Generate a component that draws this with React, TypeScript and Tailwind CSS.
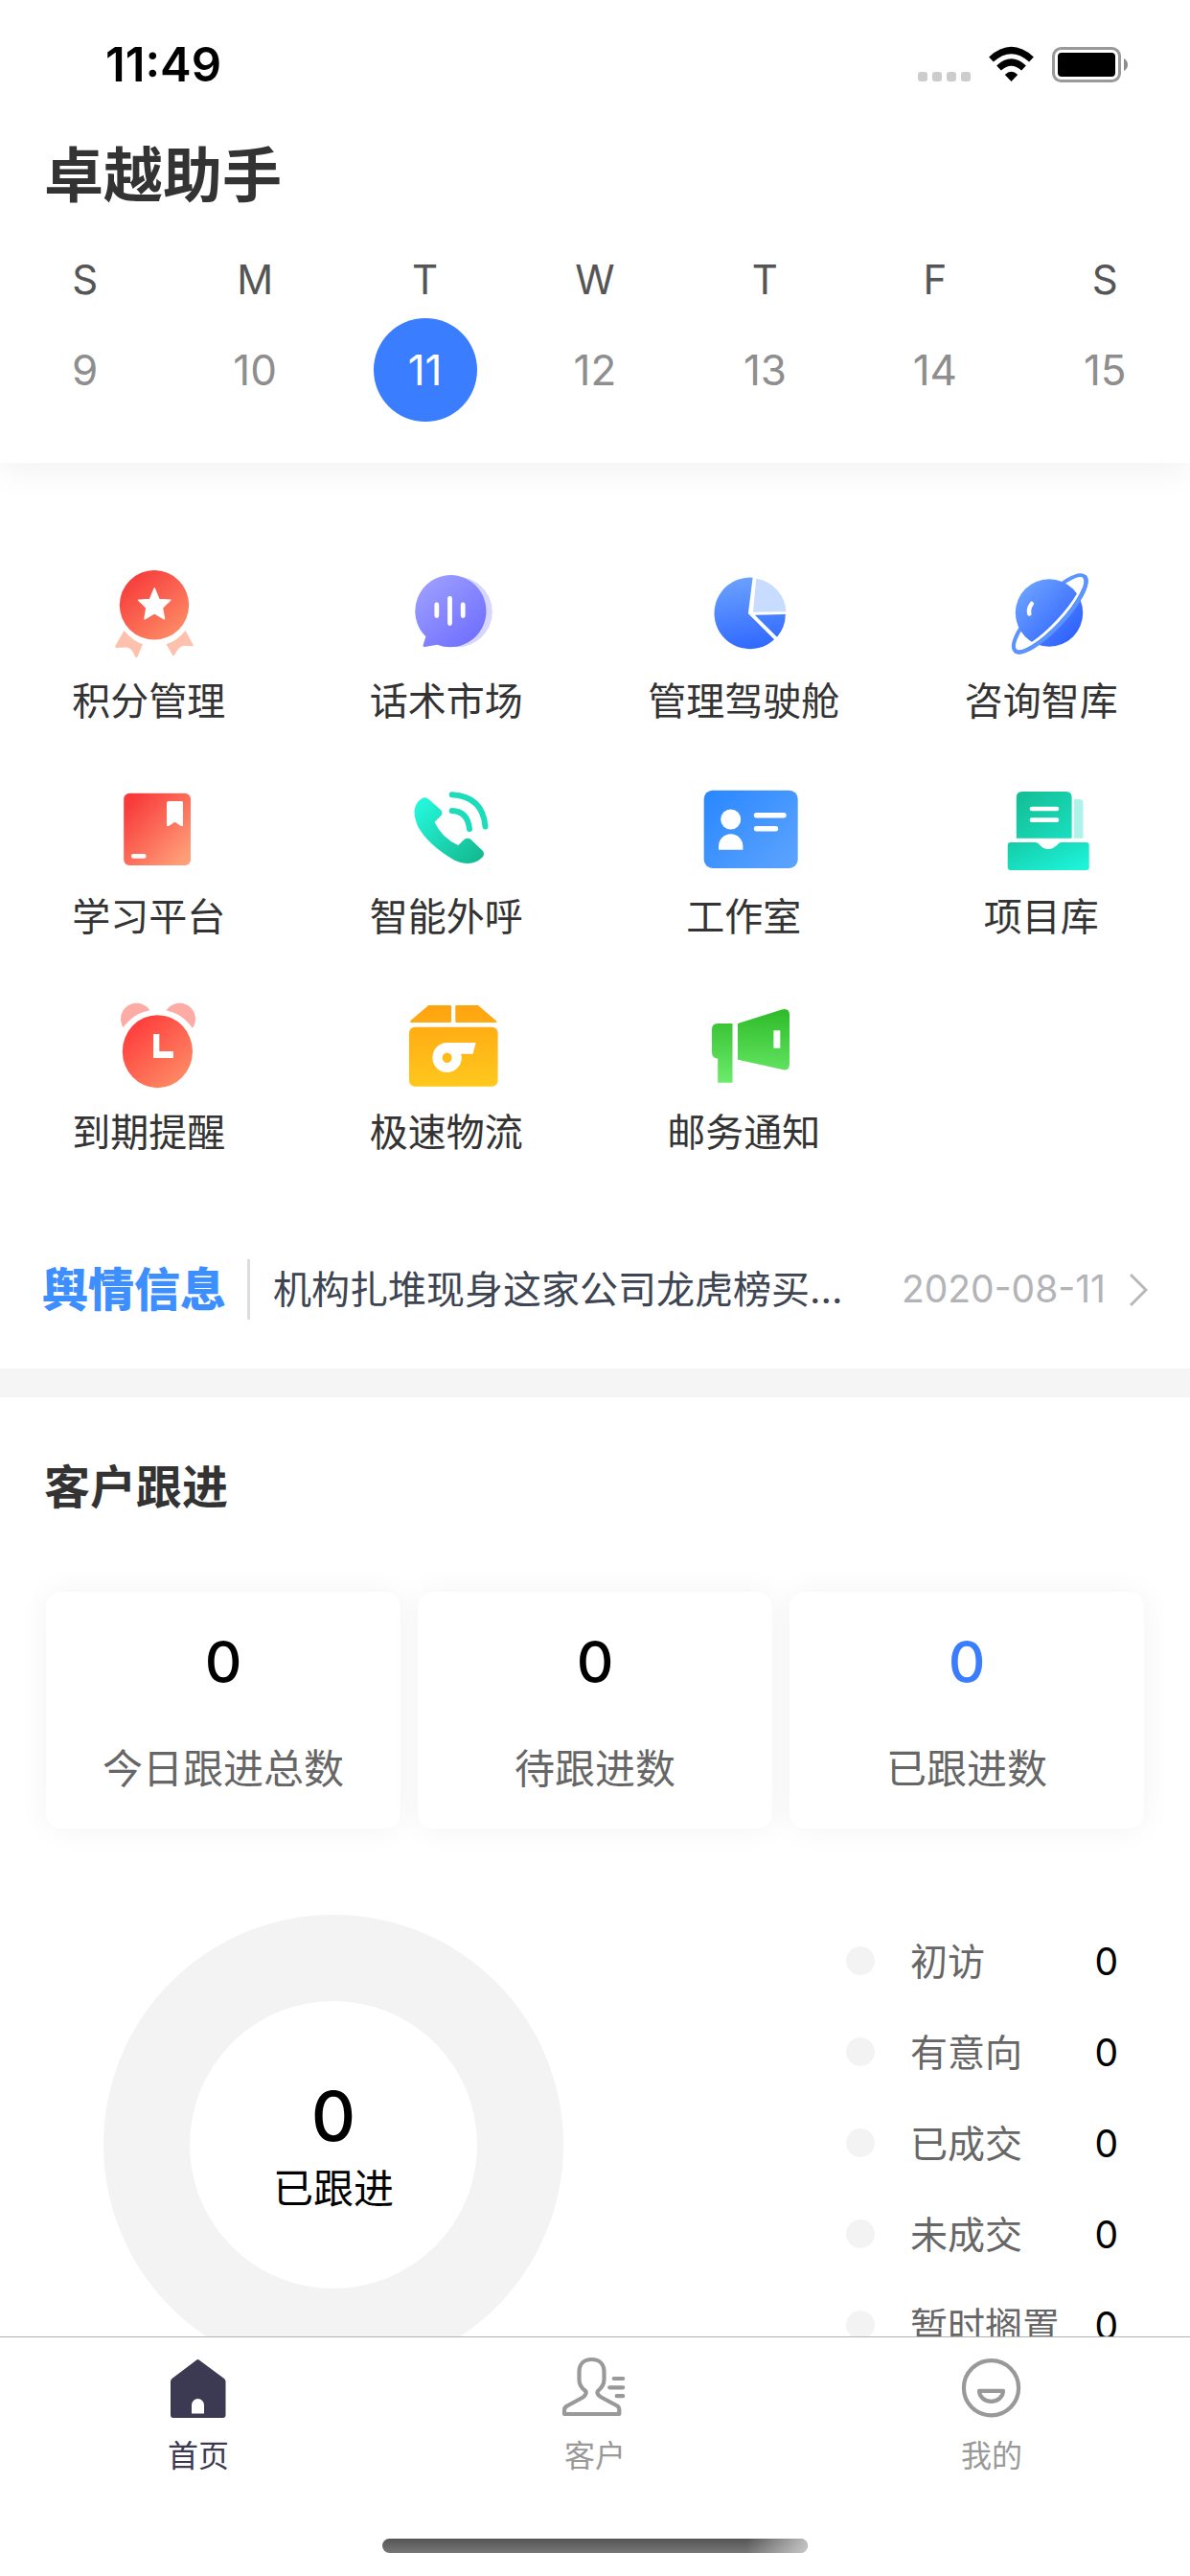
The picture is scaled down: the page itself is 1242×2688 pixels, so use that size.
import React from 'react';

const days = [
  { name: 'S', date: 9 },
  { name: 'M', date: 10 },
  { name: 'T', date: 11 },
  { name: 'W', date: 12 },
  { name: 'T', date: 13 },
  { name: 'F', date: 14 },
  { name: 'S', date: 15 },
];

const today = 11;

const MedalIcon = () => (
  <>
    <defs>
      <linearGradient id="medal" x1="0.15" y1="0.1" x2="0.85" y2="0.95">
        <stop offset="0" stopColor="#f73c3c" />
        <stop offset="1" stopColor="#fd8d66" />
      </linearGradient>
    </defs>
    <circle cx="66" cy="51.3" r="36.2" fill="url(#medal)" />
    <path
      d="M66.2 34l4.8 11.5 11.8.7-8.4 8 2.1 11.6-10.3-6-10.2 6 1.9-11.6-8.3-8 11.9-.7z"
      fill="#fff"
      stroke="#fff"
      strokeWidth="1.5"
      strokeLinejoin="round"
    />
    <path
      d="M34.6 78Q43 88.500 53.900 92.300L48.500 105.200Q47 106.500 46 105.500Q43 96 37 95.500L26.500 96Q25 95.500 25.300 94Z M98.600 78Q90.200 88.500 78.600 92.300L84.800 103.300Q86 105 87.200 103.500Q91 95 97 93.700L106 94.300Q107 94 106.600 93Z"
      fill="#fdc1ad"
    />
  </>
);

const SpeechIcon = () => (
  <>
    <defs>
      <linearGradient id="speech" x1="0.1" y1="0" x2="0.85" y2="0.9">
        <stop offset="0" stopColor="#a0a2ff" />
        <stop offset="1" stopColor="#7070ff" />
      </linearGradient>
    </defs>
    <circle cx="71" cy="58.500" r="36.800" fill="#d6d6ff" />
    <path
      d="M64.400 20a37.600 37.600 0 1 1 -14 72.700L37.500 95Q35.500 95 35.500 93.500L38.400 84.300A37.600 37.600 0 0 1 64.400 20z"
      fill="url(#speech)"
    />
    <path d="M49.800 51v11.500M63.500 44.500v26M77.200 51v11.500" stroke="#fff" strokeWidth="4.800" strokeLinecap="round" />
  </>
);

const PieIcon = () => (
  <>
    <defs>
      <linearGradient id="pie" gradientUnits="userSpaceOnUse" x1="60" y1="22" x2="72" y2="97">
        <stop offset="0" stopColor="#6ba1ff" />
        <stop offset="1" stopColor="#2f68ff" />
      </linearGradient>
    </defs>
    <path d="M69.600 22.700A37.300 37.300 0 1 0 92.100 87.300L64.900 60.300Z" fill="url(#pie)" />
    <path d="M73.200 23.700L70 58.700 104.500 58.300A37 37 0 0 0 73.200 23.700z" fill="#c8dcff" />
    <path d="M71.800 61.700L103.800 61A37 37 0 0 1 95 84.700z" fill="url(#pie)" />
  </>
);

const PlanetIcon = () => (
  <>
    <defs>
      <linearGradient id="planet" x1="0.1" y1="0.15" x2="0.85" y2="0.85">
        <stop offset="0" stopColor="#6ba0ff" />
        <stop offset="1" stopColor="#2f63ff" />
      </linearGradient>
    </defs>
    <g transform="rotate(-47 68.700 60.300)">
      <ellipse cx="68.700" cy="60.300" rx="53" ry="15" fill="none" stroke="#5b93ff" strokeWidth="4" />
    </g>
    <circle cx="68" cy="59.500" r="35.200" fill="url(#planet)" />
    <g transform="rotate(-47 68.700 60.300)" fill="none">
      <path d="M19.700 60.300a49 11.500 0 0 0 98 0" stroke="#fff" strokeWidth="3.500" />
      <path d="M15.700 60.300a53 15 0 0 0 106 0" stroke="#5b93ff" strokeWidth="4.500" />
    </g>
    <path d="M49.800 50Q46 55 47.300 60.500" stroke="#fff" strokeWidth="4.500" strokeLinecap="round" fill="none" />
  </>
);

const BookIcon = () => (
  <>
    <defs>
      <linearGradient id="book" x1="0.1" y1="0.1" x2="0.9" y2="0.9">
        <stop offset="0" stopColor="#f83a3a" />
        <stop offset="1" stopColor="#ff9d77" />
      </linearGradient>
    </defs>
    <rect x="34.200" y="22.700" width="69.800" height="75.300" rx="6" fill="url(#book)" />
    <path d="M81 31h13.500q1.500 0 1.500 1.500V57h-2l-6.500-4.300L81 57h-2V32.500q0-1.500 2-1.500z" fill="#fff" />
    <rect x="42" y="86" width="15.500" height="4.700" rx="2" fill="#fff" />
  </>
);

const PhoneIcon = () => (
  <>
    <defs>
      <linearGradient id="phone" x1="0.1" y1="0.1" x2="0.95" y2="0.9">
        <stop offset="0" stopColor="#24f5da" />
        <stop offset="1" stopColor="#13bb90" />
      </linearGradient>
    </defs>
    <path
      d="M32.500 29.500Q37.500 25 42 29.500L54 40Q57 43.500 54 46.500L47.500 52.700Q55 69 72.200 77L78.500 71Q82 68.500 85.500 71L98 83Q100 86 98 89Q87 101 68 92.500Q40 76 30 57Q22 38 32.500 29.500z"
      fill="url(#phone)"
    />
    <path
      d="M65.700 41Q82 41.500 84 60M65.700 24.200Q98 26 100.500 57.500"
      fill="none"
      stroke="#1ddcb9"
      strokeWidth="6"
      strokeLinecap="round"
    />
  </>
);

const CardIcon = () => (
  <>
    <defs>
      <linearGradient id="card" x1="0" y1="0.1" x2="1" y2="0.9">
        <stop offset="0" stopColor="#2b88ff" />
        <stop offset="1" stopColor="#5ba3ff" />
      </linearGradient>
    </defs>
    <rect x="18.700" y="19.700" width="98" height="81.300" rx="9" fill="url(#card)" />
    <circle cx="46.700" cy="50" r="10.500" fill="#fff" />
    <path d="M34 81.700V78a12.700 12.700 0 0 1 25.400 0v3.700z" fill="#fff" />
    <path d="M73.500 45.700h28.500M73.500 59.700h20" stroke="#fff" strokeWidth="5.400" strokeLinecap="round" />
  </>
);

const FolderIcon = () => (
  <>
    <defs>
      <linearGradient id="doc" x1="0" y1="0" x2="1" y2="1">
        <stop offset="0" stopColor="#12bd93" />
        <stop offset="1" stopColor="#1adfc0" />
      </linearGradient>
      <linearGradient id="tray" x1="0" y1="0" x2="1" y2="0.8">
        <stop offset="0" stopColor="#14cba6" />
        <stop offset="1" stopColor="#1ef3da" />
      </linearGradient>
    </defs>
    <path d="M39.800 21h46q5.800 0 5.800 6v42.700H33.800V27q0-6 6-6z" fill="url(#doc)" />
    <path d="M94 29h6q3.500 0 3.500 3.500v37.200H94z" fill="#adf3ea" />
    <path d="M50 39h26M50 50.700h26" stroke="#fff" strokeWidth="4.700" strokeLinecap="round" />
    <path
      d="M27.700 74H54q2.500 0 4 2.500Q62 81 67 81t9.500-4.500Q78 74 80.500 74h26.200q3 0 3 3v23q0 3-3 3h-79q-3 0-3-3V77q0-3 3-3z"
      fill="url(#tray)"
    />
  </>
);

const ClockIcon = () => (
  <>
    <defs>
      <linearGradient id="clock" x1="0.15" y1="0.1" x2="0.85" y2="0.95">
        <stop offset="0" stopColor="#ff3c3c" />
        <stop offset="1" stopColor="#fd8d66" />
      </linearGradient>
    </defs>
    <circle cx="47.500" cy="33.200" r="16.500" fill="#fdaba5" />
    <circle cx="92.500" cy="33.200" r="16.500" fill="#fdaba5" />
    <circle cx="69.500" cy="67.500" r="44" fill="#fff" />
    <ellipse cx="69.400" cy="67.200" rx="36.600" ry="38" fill="url(#clock)" />
    <path d="M65.100 49h6.200v18h14.600v7H65.100z" fill="#fff" />
  </>
);

const BoxIcon = () => (
  <>
    <defs>
      <linearGradient id="box" gradientUnits="userSpaceOnUse" x1="66" y1="19" x2="70" y2="104">
        <stop offset="0" stopColor="#ffa30f" />
        <stop offset="1" stopColor="#ffc81e" />
      </linearGradient>
    </defs>
    <path
      d="M41.300 19H64q1 0 1 1v16q0 1-1 1H23q-1.500-.5-.5-2zM70.300 19H93l18.700 16q1.500 1.500 0 2H70.300q-1 0-1-1V20q0-1 1-1z"
      fill="url(#box)"
    />
    <rect x="21" y="41.700" width="92.600" height="62" rx="6" fill="url(#box)" />
    <path
      d="M60.600 58H90.700L87.500 69.700H75q.8 2 .8 4a15.200 15.500 0 1 1-15.200-15.700zM60.600 68.500a5 5.200 0 1 0 0 10.400 5 5.200 0 0 0 0-10.400z"
      fill="#fff"
      fillRule="evenodd"
    />
  </>
);

const MegaphoneIcon = () => (
  <>
    <defs>
      <linearGradient id="mega" gradientUnits="userSpaceOnUse" x1="68" y1="24" x2="66" y2="100">
        <stop offset="0" stopColor="#2fbc29" />
        <stop offset="1" stopColor="#6ceb6c" />
      </linearGradient>
    </defs>
    <path d="M33 38h15.500v61.700H33.200V74.700Q27 74 27 68V44q0-6 6-6z" fill="url(#mega)" />
    <path
      d="M54 38l46-14.500q8-2 8 6V80q0 8-7.500 6L54 75.700zM91.400 45.300v18.400h6.900V45.300z"
      fill="url(#mega)"
      fillRule="evenodd"
    />
  </>
);

const features = [
  { label: '积分管理', Icon: MedalIcon },
  { label: '话术市场', Icon: SpeechIcon },
  { label: '管理驾驶舱', Icon: PieIcon },
  { label: '咨询智库', Icon: PlanetIcon },
  { label: '学习平台', Icon: BookIcon },
  { label: '智能外呼', Icon: PhoneIcon },
  { label: '工作室', Icon: CardIcon },
  { label: '项目库', Icon: FolderIcon },
  { label: '到期提醒', Icon: ClockIcon },
  { label: '极速物流', Icon: BoxIcon },
  { label: '邮务通知', Icon: MegaphoneIcon },
];

const stats = [
  { label: '今日跟进总数', value: 0, color: 'text-black' },
  { label: '待跟进数', value: 0, color: 'text-black' },
  { label: '已跟进数', value: 0, color: 'text-[#3a7dff]' },
];

const legend = [
  { label: '初访', value: 0 },
  { label: '有意向', value: 0 },
  { label: '已成交', value: 0 },
  { label: '未成交', value: 0 },
  { label: '暂时搁置', value: 0 },
];

const HomeIcon = () => (
  <path
    d="M33 7.500q2.500-3 5 0L63 26q1.500 1.500 1.500 3v35q0 3-3 3H10q-3 0-3-3V29q0-1.500 1.500-3zM29 62.500h13V53.500a6.500 6.500 0 0 0-13 0z"
    fill="currentColor"
    fillRule="evenodd"
  />
);

const CustomerIcon = () => (
  <g fill="none" stroke="currentColor" strokeWidth="4.200" strokeLinecap="round" strokeLinejoin="round">
    <path d="M32.500 6c-8 0-13 5-13 13v8c0 5 2 8.500 6 11.500 2 1.500 1.500 4-2 7L7 54.500q-3 1.500-3 4.500v4h57.300v-5q0-2-2-3.500L42.500 45.500c-4-2.500-5-5-3-7 4-3.500 6-6.500 6-11.500v-8c0-8-5-13-13-13z" />
    <path d="M55.700 26h9.500M51.200 35.300h14M58.700 44.200h6.500" />
  </g>
);

const MineIcon = () => (
  <g fill="none" stroke="currentColor" strokeWidth="4.200" strokeLinejoin="round">
    <circle cx="35.500" cy="35.700" r="28.600" />
    <path d="M23 38.800h25a12.500 11 0 0 1-25 0z" />
  </g>
);

const tabs = [
  { label: '首页', Icon: HomeIcon, color: 'text-[#3b3a52]' },
  { label: '客户', Icon: CustomerIcon, color: 'text-[#999999]' },
  { label: '我的', Icon: MineIcon, color: 'text-[#999999]' },
];

const StatusBar = () => (
  <div className="flex h-[136px] items-center justify-between pl-[110px] pr-16">
    <span className="text-[49px] font-semibold text-black">11:49</span>
    <svg width="220" height="40" viewBox="0 0 220 40" aria-hidden="true">
      <g fill="#cccccc">
        <rect x="0" y="27" width="10" height="10" rx="3" />
        <rect x="15" y="27" width="10" height="10" rx="3" />
        <rect x="30" y="27" width="10" height="10" rx="3" />
        <rect x="45" y="27" width="10" height="10" rx="3" />
      </g>
      <g fill="none" stroke="#000" strokeWidth="7">
        <path d="M76.500 14Q97.500-5 118.500 14" />
        <path d="M84.500 23Q97.500 11 110.500 23" />
      </g>
      <path d="M90.800 30Q97.500 23.500 104.200 30L97.500 37z" fill="#000" />
      <rect x="141.500" y="2.500" width="69" height="34" rx="8" fill="none" stroke="#999" strokeWidth="3" />
      <rect x="146" y="7" width="60" height="25" rx="4" />
      <path d="M215 13q4 2.500 4 6.500t-4 6.500z" fill="#8c8c8c" />
    </svg>
  </div>
);

const WeekHeader = () => (
  <header className="relative bg-white pb-[43px] shadow-[0_10px_32px_rgba(0,0,0,0.05)]">
    <StatusBar />
    <h1 className="px-[46px] text-[62px] leading-[96px] font-bold text-[#333333]">卓越助手</h1>
    <div className="grid grid-cols-7 pt-[30px]">
      {days.map((day) => (
        <button key={day.date} type="button" className="flex flex-col items-center gap-[10px]">
          <span className="text-[42px] leading-[60px] text-[#555555]">{day.name}</span>
          <span
            className={
              day.date === today
                ? 'flex size-[108px] items-center justify-center rounded-full bg-[#3a7dff] text-[44px] text-white'
                : 'flex size-[108px] items-center justify-center text-[44px] text-[#8e8e8e]'
            }
          >
            {day.date}
          </span>
        </button>
      ))}
    </div>
  </header>
);

const FeatureGrid = () => (
  <nav className="grid grid-cols-4 gap-y-[41px] pt-[97px]">
    {features.map(({ label, Icon }) => (
      <a key={label} href="#" className="flex flex-col items-center">
        <svg width="120" height="120" viewBox="0 0 120 120" aria-hidden="true">
          <Icon />
        </svg>
        <span className="text-[40px] leading-[64px] text-[#333333]">{label}</span>
      </a>
    ))}
  </nav>
);

const NewsRow = () => (
  <a href="#" className="mt-[49px] flex h-[165px] items-center px-11">
    <strong className="text-[48px] font-black text-[#3d8fff]">舆情信息</strong>
    <span className="ml-[22px] h-[63px] w-[3px] shrink-0 bg-[#dddddd]"></span>
    <span className="ml-6 truncate text-[40px] text-[#3d4452]">机构扎堆现身这家公司龙虎榜买...</span>
    <time className="ml-auto shrink-0 text-[39px] text-[#b2b4b8]">2020-08-11</time>
    <svg className="ml-6 shrink-0" width="20" height="36" viewBox="0 0 20 36" fill="none" aria-hidden="true">
      <path d="M2 2l16 16L2 34" stroke="#b8b8b8" strokeWidth="3" />
    </svg>
  </a>
);

const FollowUp = () => (
  <section className="pt-[58px]">
    <h2 className="px-[46px] text-[48px] leading-[72px] font-bold text-[#333333]">客户跟进</h2>
    <div className="mt-[73px] grid grid-cols-3 gap-[18px] px-12">
      {stats.map((stat) => (
        <div
          key={stat.label}
          className="flex flex-col items-center rounded-2xl bg-white pt-[33px] pb-[30px] shadow-[0_0_32px_rgba(0,0,0,0.05)]"
        >
          <span className={`text-[60px] leading-[80px] font-medium ${stat.color}`}>{stat.value}</span>
          <span className="mt-10 text-[42px] leading-[64px] text-[#666666]">{stat.label}</span>
        </div>
      ))}
    </div>
    <div className="mt-[90px] flex items-start justify-between pl-[108px] pr-[75px]">
      <div className="flex size-[480px] flex-col items-center justify-center rounded-full border-[90px] border-[#f3f3f3] pt-2">
        <span className="text-[72px] leading-[80px] font-medium text-black">0</span>
        <span className="mt-1 text-[42px] leading-[64px] text-black">已跟进</span>
      </div>
      <ul className="w-[284px]">
        {legend.map((item) => (
          <li key={item.label} className="flex h-[95px] items-center">
            <span className="size-[30px] rounded-full bg-[#f3f3f3]"></span>
            <span className="ml-[37px] pt-1 text-[39px] text-[#666666]">{item.label}</span>
            <span className="ml-auto pt-1 text-[39px] text-black">{item.value}</span>
          </li>
        ))}
      </ul>
    </div>
  </section>
);

const TabBar = () => (
  <footer className="shrink-0 border-t border-[#b2b2b2] bg-white">
    <nav className="grid grid-cols-3 pt-[17px]">
      {tabs.map(({ label, Icon, color }) => (
        <a key={label} href="#" className={`flex flex-col items-center ${color}`}>
          <svg width="72" height="72" viewBox="0 0 72 72" aria-hidden="true">
            <Icon />
          </svg>
          <span className="mt-[11px] text-[32px] leading-[48px]">{label}</span>
        </a>
      ))}
    </nav>
    <div className="mx-auto mt-[62px] mb-6 flex h-[15px] w-[444px] justify-end overflow-hidden rounded-full bg-linear-to-b from-[#555555] to-[#777777]">
      <span className="w-16 bg-linear-to-r from-transparent to-white/60"></span>
    </div>
  </footer>
);

const App = () => {
  return (
    <div className="flex h-screen flex-col bg-white font-[Inter,'Noto_Sans_CJK_SC',sans-serif]">
      <main className="min-h-0 flex-1 overflow-y-auto [scrollbar-width:none]">
        <WeekHeader />
        <FeatureGrid />
        <NewsRow />
        <div className="h-[30px] bg-[#f5f5f5]"></div>
        <FollowUp />
      </main>
      <TabBar />
    </div>
  );
};

export default App;
